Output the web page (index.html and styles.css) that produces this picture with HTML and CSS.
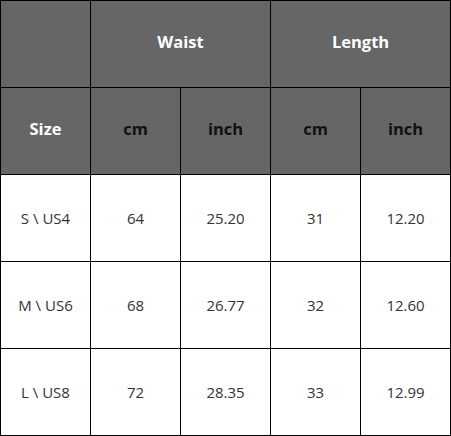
FILE: index.html
```html
<!DOCTYPE html>
<html>
<head>
<meta charset="utf-8">
<link rel="stylesheet" href="styles.css">
</head>
<body>
<table class="size-table">
  <colgroup>
    <col class="c"><col class="c"><col class="c"><col class="c"><col class="c">
  </colgroup>
  <tr class="head">
    <td></td>
    <td colspan="2" class="white">Waist</td>
    <td colspan="2" class="white">Length</td>
  </tr>
  <tr class="head">
    <td class="white">Size</td>
    <td class="black">cm</td>
    <td class="black">inch</td>
    <td class="black">cm</td>
    <td class="black">inch</td>
  </tr>
  <tr class="row">
    <td>S \ US4</td><td>64</td><td>25.20</td><td>31</td><td>12.20</td>
  </tr>
  <tr class="row">
    <td>M \ US6</td><td>68</td><td>26.77</td><td>32</td><td>12.60</td>
  </tr>
  <tr class="row">
    <td>L \ US8</td><td>72</td><td>28.35</td><td>33</td><td>12.99</td>
  </tr>
</table>
</body>
</html>
```

FILE: styles.css
```css
html, body {
  margin: 0;
  padding: 0;
  background: #ffffff;
}
.size-table {
  border-collapse: collapse;
  table-layout: fixed;
  width: 451px;
  font-family: "Open Sans", "Noto Sans", sans-serif;
}
.size-table col.c {
  width: 90px;
}
.size-table td {
  border: 1px solid #000;
  height: 86px;
  padding: 0;
  text-align: center;
  vertical-align: middle;
  font-size: 15px;
  color: #333333;
}
.head td {
  background: #666666;
  font-weight: bold;
  font-size: 16.5px;
  height: 80px;
  padding-bottom: 6px;
}
.head td.white {
  color: #ffffff;
}
.head td.black {
  color: #111111;
}
```
